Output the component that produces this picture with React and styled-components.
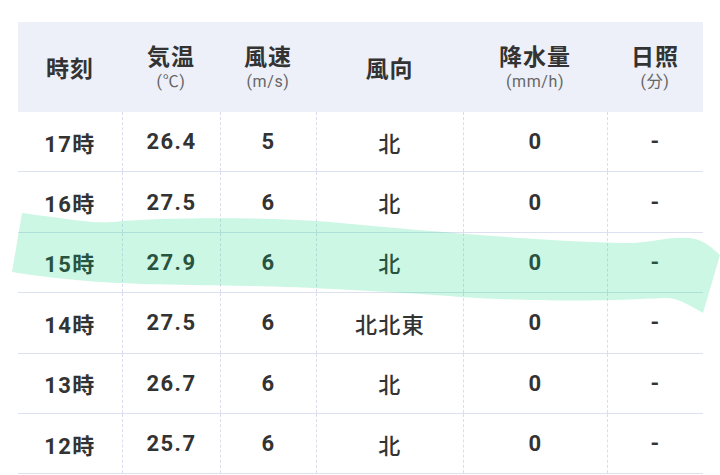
import React from "react";
import styled, { createGlobalStyle } from "styled-components";

const Global = createGlobalStyle`
  html, body { margin: 0; padding: 0; background: #ffffff; }
  body { font-family: Roboto, "Noto Sans CJK JP", sans-serif; color: #333333; }
`;

const Page = styled.div`
  position: relative;
  width: 720px;
  height: 475px;
  overflow: hidden;
  padding: 22px 0 0 18px;
  box-sizing: border-box;
`;

const COLS = "104px 98px 96px 147px 144px 96px";

const Table = styled.div`
  width: 685px;
  display: flex;
  flex-direction: column;
`;

const HeadRow = styled.div`
  display: grid;
  grid-template-columns: ${COLS};
  height: 90px;
  background: #edf0f8;
`;

const HeadCell = styled.div`
  display: flex;
  flex-direction: column;
  align-items: center;
  justify-content: center;
  padding-top: ${(p) => (p.$unit ? "2px" : "0")};
`;

const HeadLabel = styled.span`
  font-family: "Noto Sans CJK JP", sans-serif;
  font-weight: 700;
  font-size: 23px;
  line-height: 28px;
  letter-spacing: 1px;
  color: #333333;
`;

const Unit = styled.span`
  font-family: Roboto, "Noto Sans CJK JP", sans-serif;
  font-weight: 400;
  font-size: 16px;
  line-height: 26px;
  letter-spacing: 0.6px;
  color: #666666;
`;

const Row = styled.div`
  display: grid;
  grid-template-columns: ${COLS};
  height: 60.4px;
  box-sizing: border-box;
  border-bottom: 1px solid #dde0f1;
`;

const Cell = styled.div`
  display: flex;
  align-items: center;
  justify-content: center;
  font-family: Roboto, "Noto Sans CJK JP", sans-serif;
  font-weight: ${(p) => (p.$cjk ? 500 : 700)};
  font-size: 22px;
  letter-spacing: 1.4px;
  color: #333333;
  border-left: ${(p) => (p.$first ? "none" : "1px dashed #dcdcee")};
`;

const Highlight = styled.svg`
  position: absolute;
  left: 0;
  top: 0;
  width: 720px;
  height: 475px;
  pointer-events: none;
`;

const headers = [
  { label: "時刻" },
  { label: "気温", unit: "(℃)" },
  { label: "風速", unit: "(m/s)" },
  { label: "風向" },
  { label: "降水量", unit: "(mm/h)" },
  { label: "日照", unit: "(分)" },
];

const rows = [
  ["17時", "26.4", "5", "北", "0", "-"],
  ["16時", "27.5", "6", "北", "0", "-"],
  ["15時", "27.9", "6", "北", "0", "-"],
  ["14時", "27.5", "6", "北北東", "0", "-"],
  ["13時", "26.7", "6", "北", "0", "-"],
  ["12時", "25.7", "6", "北", "0", "-"],
];

export default function App() {
  return (
    <>
      <Global />
      <Page>
        <Table>
          <HeadRow>
            {headers.map((h) => (
              <HeadCell key={h.label} $unit={!!h.unit}>
                <HeadLabel>{h.label}</HeadLabel>
                {h.unit && <Unit>{h.unit}</Unit>}
              </HeadCell>
            ))}
          </HeadRow>
          {rows.map((r) => (
            <Row key={r[0]}>
              {r.map((v, i) => (
                <Cell key={i} $first={i === 0} $cjk={i === 3}>
                  {v}
                </Cell>
              ))}
            </Row>
          ))}
        </Table>
        <Highlight viewBox="0 0 720 475">
          <path
            d="M22,213 C60,218 95,224 112,222 C150,218 250,216 330,222 C420,230 520,240 620,243 C650,244 665,236 690,238 C705,240 712,248 720,255 L703,313 C690,306 680,298 665,298 C620,300 560,303 460,297 C380,291 300,287 250,286 C180,285 130,284 100,282 C60,279 30,275 12,272 Z"
            fill="rgba(0,215,120,0.2)"
          />
        </Highlight>
      </Page>
    </>
  );
}
